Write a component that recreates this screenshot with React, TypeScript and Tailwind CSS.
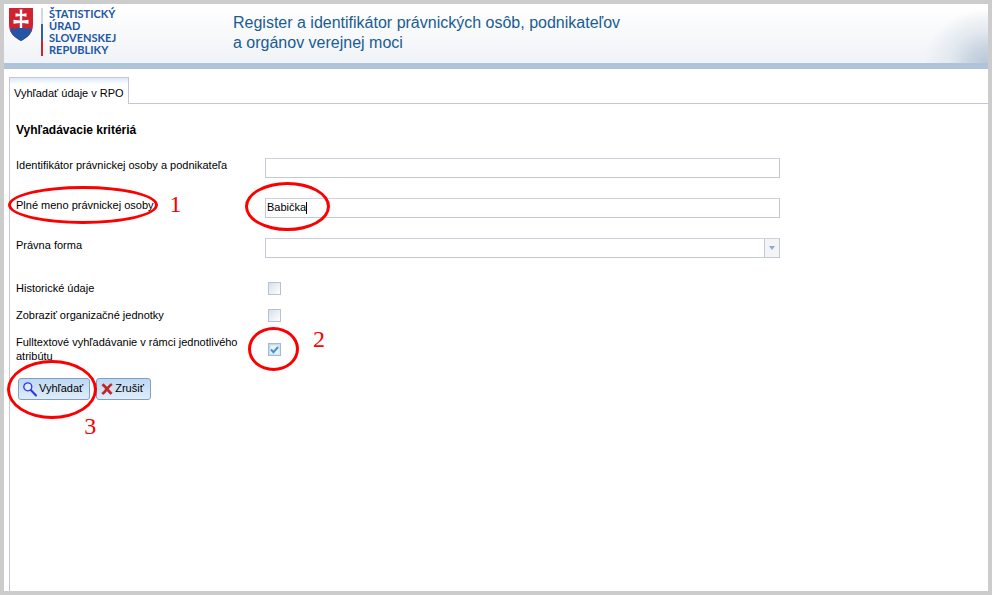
import { useState } from 'react'
import type { ReactNode } from 'react'
import { clsx } from 'clsx'

const fieldClass =
  'block h-5 w-full border border-[#c3c8d8] border-t-[#cdd2da] bg-white px-px pb-0.5 text-[11px] text-black focus:outline-none'

function CoatOfArms() {
  return (
    <svg viewBox="0 0 24 33" className="h-[33px] w-6" aria-hidden="true">
      <defs>
        <clipPath id="shield">
          <path d="M0 0H24V17C24 25 18 30 12 33C6 30 0 25 0 17Z" />
        </clipPath>
      </defs>
      <g clipPath="url(#shield)">
        <rect width="24" height="33" fill="#cf2332" />
        <path
          d="M0 24C1 20 5 19.500 6.500 21.500C8 18.500 16 18.500 17.500 21.500C19 19.500 23 20 24 24V33H0Z"
          fill="#2355a5"
        />
      </g>
      <path
        d="M10.800 2.500L10.300 1.500H13.700L13.200 2.500V6L17.500 5.300V8.700L13.200 8V12.500L19.500 11.800V15.700L13.200 15V20H10.800V15L4.500 15.700V11.800L10.800 12.500V8L6.500 8.700V5.300L10.800 6Z"
        fill="#fff"
      />
    </svg>
  )
}

function SearchIcon() {
  return (
    <svg viewBox="0 0 14 15" className="h-[15px] w-3.5" fill="none" stroke="#2b35e8" aria-hidden="true">
      <circle cx="4.800" cy="4.800" r="4" strokeWidth="1.300" fill="#dceafc" />
      <path d="M7.800 8L13 13.500" strokeWidth="2" strokeLinecap="round" />
    </svg>
  )
}

function CancelIcon() {
  return (
    <svg viewBox="0 0 12 12" className="h-3 w-3" aria-hidden="true">
      <path
        d="M2.500 0.800C4 2 5 3 6 4.300C7.200 2.800 8.500 1.500 10 0.600L11.300 1.800C9.800 3 8.500 4.400 7.500 5.900C8.700 7.200 10 8.700 11.200 10L9.500 11.500C8.200 10.300 7.100 9 6 7.700C5 9 3.900 10.300 2.500 11.500L0.600 10.200C2 8.900 3.400 7.400 4.500 5.900C3.300 4.500 2.200 3.300 0.800 2.200Z"
        fill="#cc2222"
        stroke="#a51616"
        strokeWidth="0.500"
      />
    </svg>
  )
}

// Red ring drawn over the element it wraps
function Ring({ className }: { className: string }) {
  return (
    <span
      aria-hidden="true"
      className={clsx('pointer-events-none absolute z-10 rounded-[50%] border-[3px] border-[#fa0000]', className)}
    />
  )
}

function StepNumber({ className, children }: { className: string; children: ReactNode }) {
  return (
    <span
      className={clsx(
        "pointer-events-none absolute z-10 font-['Liberation_Serif',serif] text-[24px] leading-6 text-[#fa0000]",
        className,
      )}
    >
      {children}
    </span>
  )
}

function CheckBox({
  id,
  checked,
  onChange,
}: {
  id: string
  checked: boolean
  onChange: (checked: boolean) => void
}) {
  return (
    <span className="relative block h-[13px] w-[13px]">
      <input
        id={id}
        type="checkbox"
        checked={checked}
        onChange={e => onChange(e.target.checked)}
        className="block h-full w-full appearance-none border border-[#b9c2cf] bg-linear-to-br from-[#d5e0ea] to-white checked:border-[#a9b8ca] checked:from-[#b9d5ec] checked:to-[#d9ebfa]"
      />
      {checked && (
        <svg viewBox="0 0 13 13" className="pointer-events-none absolute inset-0" fill="none" aria-hidden="true">
          <path d="M2.500 2.500H10.500V10.500H2.500Z" fill="#eaf4fc" />
          <path d="M3 6.500L5.500 9.200L10 4" stroke="#4a8fc6" strokeWidth="2" />
        </svg>
      )}
    </span>
  )
}

function ActionButton({
  icon,
  type,
  onClick,
  children,
}: {
  icon: ReactNode
  type: 'submit' | 'button'
  onClick?: () => void
  children: ReactNode
}) {
  return (
    <button
      type={type}
      onClick={onClick}
      className="flex h-[22px] items-center gap-0.5 rounded-[3px] border border-[#7f9fc4] bg-linear-to-b from-[#bdd8f3] to-[#e0edfa] pr-1.5 pl-1 text-[11px] leading-4 text-black"
    >
      {icon}
      <span className="pb-0.5">{children}</span>
    </button>
  )
}

export default function App() {
  const [identifier, setIdentifier] = useState('')
  const [name, setName] = useState('Babička')
  const [nameTouched, setNameTouched] = useState(false)
  const [legalForm, setLegalForm] = useState('')
  const [historical, setHistorical] = useState(false)
  const [units, setUnits] = useState(false)
  const [fulltext, setFulltext] = useState(true)

  function handleReset() {
    setIdentifier('')
    setName('')
    setNameTouched(true)
    setLegalForm('')
    setHistorical(false)
    setUnits(false)
    setFulltext(false)
  }

  return (
    <div className="flex min-h-screen flex-col border-4 border-[#cccccc] bg-white font-['Liberation_Sans',Arial,sans-serif] text-[11px] text-black">
      {/* Header */}
      <header className="border-b-[6px] border-[#afc3da] bg-linear-to-b from-white to-[#f0f3f7]">
        <div className="flex h-[59px] bg-[radial-gradient(ellipse_64px_54px_at_100%_100%,#b9c7d8,#cbd5e1_30%,#e3e9ef_60%,transparent)] pl-[5px]">
          <div className="flex w-56 shrink-0 items-start pt-1">
            <CoatOfArms />
            <div className="ml-2 flex h-12 w-0.5 flex-col" aria-hidden="true">
              <span className="flex-1 bg-[#d3d6db]" />
              <span className="flex-1 bg-[#2f5fa8]" />
              <span className="flex-1 bg-[#cf2332]" />
            </div>
            <p className="ml-1.5 font-['Lato',sans-serif] text-[11px] leading-3 font-bold text-[#2355a5]">
              ŠTATISTICKÝ
              <br />
              ÚRAD
              <br />
              SLOVENSKEJ
              <br />
              REPUBLIKY
            </p>
          </div>
          <h1 className="pt-[9px] text-[16px] leading-5 text-[#1a5c92]">
            Register a identifikátor právnických osôb, podnikateľov
            <br />
            a orgánov verejnej moci
          </h1>
        </div>
      </header>

      {/* Tabs */}
      <div className="mt-2 flex pl-[5px]" role="tablist">
        <button
          type="button"
          role="tab"
          aria-selected="true"
          className="h-[27px] border border-b-0 border-[#c3c8d8] bg-linear-to-b from-[#d9e9fb] to-white to-25% px-1 pt-1"
        >
          Vyhľadať údaje v RPO
        </button>
        <div className="flex-1 border-b border-[#c3c8d8]" />
      </div>

      {/* Search form */}
      <main className="ml-[5px] flex-1 border-l border-[#c3c8d8] px-1.5 pt-[18px]">
        <h2 className="text-[12px] leading-4 font-bold">Vyhľadávacie kritériá</h2>
        <form onSubmit={e => e.preventDefault()}>
          <div className="mt-5 grid max-w-[764px] grid-cols-[249px_1fr] gap-y-5">
            <label htmlFor="identifier" className="leading-[14px]">
              Identifikátor právnickej osoby a podnikateľa
            </label>
            <input
              id="identifier"
              type="text"
              value={identifier}
              onChange={e => setIdentifier(e.target.value)}
              className={fieldClass}
            />

            <div className="leading-[14px]">
              <span className="relative inline-block">
                <label htmlFor="name">Plné meno právnickej osoby</label>
                <Ring className="-top-3 -right-1 -bottom-3 -left-2" />
                <StepNumber className="-top-1.5 left-full ml-4">1</StepNumber>
              </span>
            </div>
            <div className="relative">
              <input
                id="name"
                type="text"
                value={name}
                onFocus={() => setNameTouched(true)}
                onChange={e => setName(e.target.value)}
                className={fieldClass}
              />
              {!nameTouched && (
                <span className="pointer-events-none absolute top-1 left-[41px] h-3 w-px bg-black" aria-hidden="true" />
              )}
              <Ring className="-top-4 -left-5 h-[49px] w-[85px]" />
            </div>

            <label htmlFor="legal-form" className="leading-[14px]">
              Právna forma
            </label>
            <div className="relative">
              <select
                id="legal-form"
                value={legalForm}
                onChange={e => setLegalForm(e.target.value)}
                className={clsx(fieldClass, 'appearance-none')}
              >
                <option value=""></option>
              </select>
              <span className="pointer-events-none absolute inset-y-px right-px flex w-[15px] items-center justify-center border-l border-[#c3c8d8] bg-[#f3f4f6]">
                <svg viewBox="0 0 6 4" className="h-1 w-1.5" aria-hidden="true">
                  <path d="M0 0H6L3 4Z" fill="#8faad6" />
                </svg>
              </span>
            </div>
          </div>

          <div className="mt-[23px] grid grid-cols-[252px_1fr] items-center gap-y-3">
            <label htmlFor="historical" className="leading-[15px]">
              Historické údaje
            </label>
            <CheckBox id="historical" checked={historical} onChange={setHistorical} />

            <label htmlFor="units" className="leading-[15px]">
              Zobraziť organizačné jednotky
            </label>
            <CheckBox id="units" checked={units} onChange={setUnits} />

            <label htmlFor="fulltext" className="pr-5 leading-[14px]">
              Fulltextové vyhľadávanie v rámci jednotlivého atribútu
            </label>
            <div className="relative w-[13px]">
              <CheckBox id="fulltext" checked={fulltext} onChange={setFulltext} />
              <Ring className="-top-4 -left-5 h-11 w-[51px]" />
              <StepNumber className="-top-4 left-full ml-8">2</StepNumber>
            </div>
          </div>

          <div className="mt-[15px] flex gap-1.5 pl-0.5">
            <div className="relative">
              <ActionButton type="submit" icon={<SearchIcon />}>
                Vyhľadať
              </ActionButton>
              <Ring className="-top-[18px] -left-[11px] h-[59px] w-[90px]" />
              <StepNumber className="top-9 right-0 -mr-1.5">3</StepNumber>
            </div>
            <ActionButton type="button" icon={<CancelIcon />} onClick={handleReset}>
              Zrušiť
            </ActionButton>
          </div>
        </form>
      </main>
    </div>
  )
}
